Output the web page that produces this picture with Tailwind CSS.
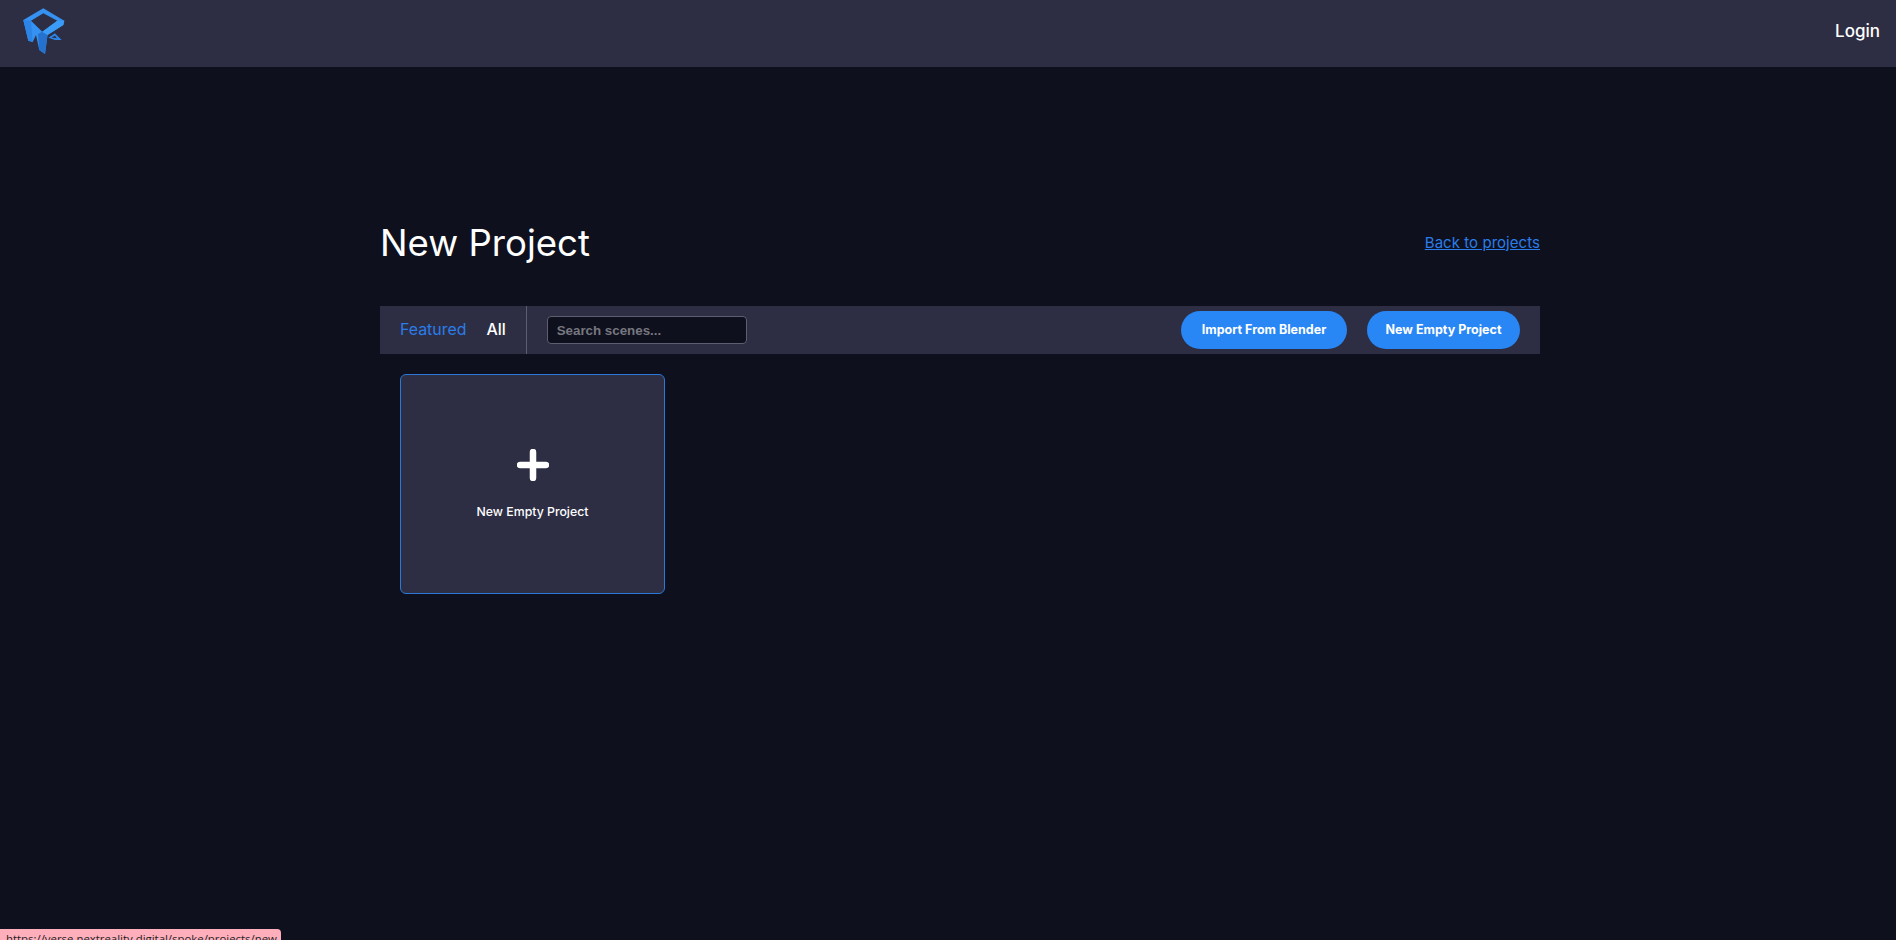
<!DOCTYPE html>
<html lang="en">
  <head>
    <meta charset="UTF-8" />
    <meta name="viewport" content="width=device-width, initial-scale=1.0" />
    <title>New Project</title>
    <script src="https://cdn.jsdelivr.net/npm/@tailwindcss/browser@4"></script>
  </head>
  <body class="bg-[#0e101e] h-[940px] overflow-hidden font-['Inter',sans-serif] text-white">
    <!-- Header -->
    <header class="h-[67px] bg-[#2d2e44] flex items-center justify-between pl-[23px] pr-[16px]">
      <svg class="w-[42px] h-[47px] mt-[-5px]" viewBox="0 0 42 47">
        <path d="M20.3 0.3 L41.3 12.7 L40.3 17 L24.5 27 L22 46 L16.3 42 L13 27 L9.7 34 L5.3 32.7 L0.3 12 Z" fill="#3592f2" />
        <path d="M20.3 5.3 L34.3 12.7 L19.3 23.7 L8 12.7 Z" fill="#2d2e44" />
        <path d="M0.3 12 L8 12.7 L9.7 34 L5.3 32.7 Z" fill="#2c84e6" />
        <path d="M15 26 L19.3 23.7 L24.5 27 L22 46 L16.3 42 Z" fill="#2472ce" />
        <path d="M19.3 23.7 L34.3 12.7 L41.3 12.7 L40.3 17 L24.5 27 Z" fill="#3a9cf6" />
        <path d="M25.3 29.7 L32 25.3 L35.3 28.7 L38.7 32 L32 32 Z" fill="#2c84e6" />
        <path d="M28.5 29.5 L32 27.8 L33.8 30.2 Z" fill="#2d2e44" />
      </svg>
      <a href="#" class="text-[17px] leading-none font-medium mt-[-4px]">Login</a>
    </header>

    <main class="w-[1160px] ml-[380px]">
      <div class="flex items-center justify-between h-[66px] mt-[143px]">
        <h1 class="text-[36.6px] font-normal">New Project</h1>
        <a href="#" class="text-[#2b7de9] text-[15px] tracking-[0.05px] underline">Back to projects</a>
      </div>

      <!-- Toolbar -->
      <div class="mt-[30px] h-[48px] bg-[#2d2e44] flex items-center justify-between">
        <div class="flex items-center h-full">
          <div class="flex items-center gap-[20px] h-full pl-[20px] pr-[20px] border-r border-[#5d5e70] text-[15.9px]">
            <a href="#" class="text-[#2b7de9]">Featured</a>
            <a href="#" class="font-medium">All</a>
          </div>
          <input
            type="text"
            placeholder="Search scenes..."
            class="ml-[20px] w-[200px] h-[28px] px-[9px] bg-[#0e101e] border border-[#5d5e70] rounded-[4px] text-[13.33px] font-bold font-['Liberation_Sans',sans-serif] placeholder:text-[#77777f]"
          />
        </div>
        <div class="flex items-center gap-[20px] pr-[20px]">
          <button class="w-[166px] h-[38px] rounded-full bg-[#2886f5] text-[12.5px] font-bold">Import From Blender</button>
          <button class="w-[153px] h-[38px] rounded-full bg-[#2886f5] text-[12.5px] font-bold">New Empty Project</button>
        </div>
      </div>

      <!-- Scene cards -->
      <div class="px-[20px] pt-[20px]">
        <a href="#" class="w-[265px] h-[220px] bg-[#2d2e44] border border-[#2b78d8] rounded-[6px] flex flex-col items-center pt-[74px]">
          <svg class="w-[32px] h-[32px]" viewBox="0 0 32 32">
            <path d="M16 3 V29 M3 16 H29" stroke="#fff" stroke-width="6.5" stroke-linecap="round" />
          </svg>
          <span class="mt-[22px] text-[12.3px] font-medium">New Empty Project</span>
        </a>
      </div>
    </main>

    <!-- Browser link preview -->
    <div class="fixed left-0 top-[929px] w-[281px] h-[20px] bg-[#ffaebc] rounded-tr-[4px] pl-[6px] text-[11.4px] leading-[20px] text-[#222] font-['Open_Sans',sans-serif] whitespace-nowrap overflow-hidden">https://verse.nextreality.digital/spoke/projects/new</div>
  </body>
</html>
